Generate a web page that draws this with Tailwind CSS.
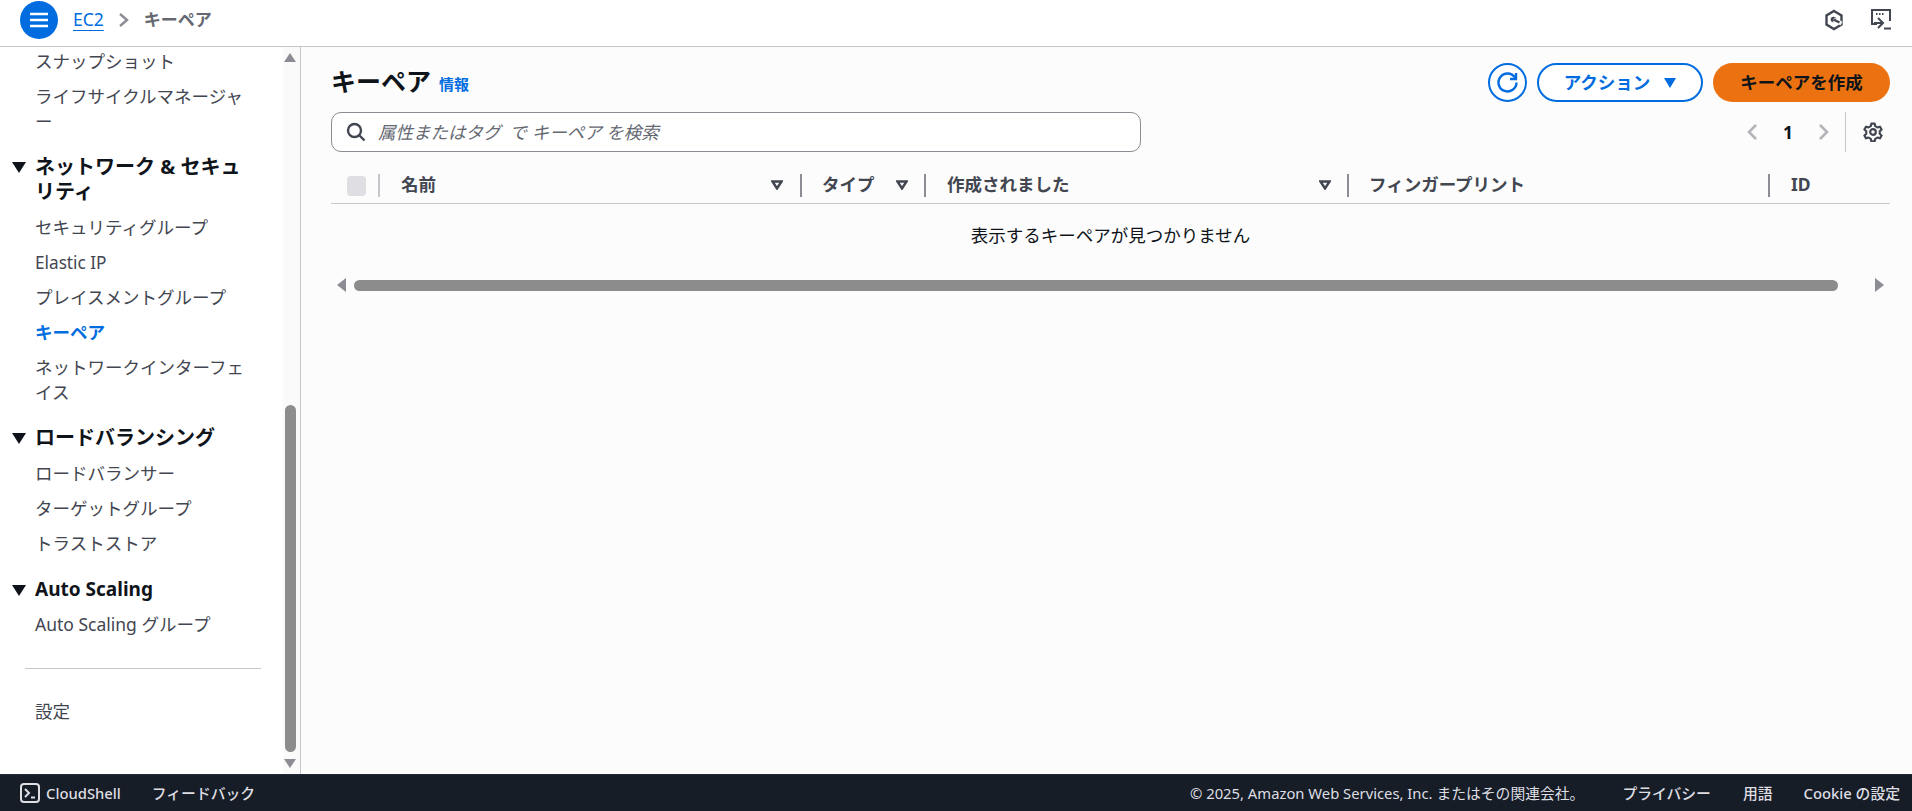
<!DOCTYPE html>
<html lang="ja">
<head>
<meta charset="UTF-8" />
<title>キーペア | EC2</title>
<script src="https://cdn.jsdelivr.net/npm/@tailwindcss/browser@4"></script>
</head>
<body class="h-[811px] w-[1912px] overflow-hidden bg-white font-['Noto_Sans','Noto_Sans_CJK_JP',sans-serif] text-[17.5px] leading-[25px] text-[#424650]">
<div class="flex h-[811px] flex-col">

	<!-- Top bar -->
	<header class="flex h-[47px] shrink-0 items-center border-b border-[#c6c6cd] bg-white pb-[7px] pl-[20px] pr-[21px]">
		<button class="flex h-[38px] w-[38px] items-center justify-center rounded-full bg-[#006ce0]">
			<svg width="20" height="16" viewBox="0 0 20 16" fill="none" stroke="white" stroke-width="2.4"><path d="M1 2h18M1 8h18M1 14h18" /></svg>
		</button>
		<a class="ml-[15px] text-[#006ce0] underline underline-offset-4">EC2</a>
		<svg class="ml-[14px]" width="12" height="16" viewBox="0 0 12 16" fill="none" stroke="#8c8c94" stroke-width="2.4"><path d="M2 2l7 6-7 6" /></svg>
		<span class="ml-[14px] text-[17px] font-bold text-[#656871]">キーペア</span>
		<div class="ml-auto flex items-center gap-[27px]">
			<svg width="20" height="22" viewBox="0 0 20 22" fill="none" stroke="#424650" stroke-width="2.4"><path d="M10 2l7.5 4.4v9.2L10 20l-7.5-4.4V6.4z" /><circle cx="9.5" cy="10.5" r="2.8" fill="#424650" stroke="none" /><path d="M9.500 10.500l8 4" stroke="white" stroke-width="4" /><path d="M9.500 10.500l6 3" /></svg>
			<svg width="20" height="21" viewBox="0 0 20 21" fill="none" stroke="#424650" stroke-width="2"><path d="M6 15H1V1h18v11" /><path d="M5 5h1.500M8 5h1.500M11 5h1.500" /><path d="M7 9l5 5-5 5M3 14h8M13 19.500h7" /></svg>
		</div>
	</header>

	<div class="flex min-h-0 flex-1">
		<!-- Side navigation -->
		<nav class="flex w-[301px] shrink-0 border-r border-[#c6c6cd]">
			<div class="w-[283px] shrink-0 pl-[35px] pr-[33px]">
				<p class="-mt-[3px] py-[5px]">スナップショット</p>
				<p class="py-[5px]">ライフサイクルマネージャー</p>

				<h3 class="relative mt-[15px] text-[20px] font-bold text-[#0f141a]"><span class="absolute left-[-23px] top-[8px] h-0 w-0 border-x-[7px] border-t-[11px] border-x-transparent border-t-[#0f141a]"></span>ネットワーク &amp; セキュリティ</h3>
				<ul class="mt-[6px]">
					<li class="py-[5px]">セキュリティグループ</li>
					<li class="py-[5px] text-[17.2px]">Elastic IP</li>
					<li class="py-[5px]">プレイスメントグループ</li>
					<li class="py-[5px] font-bold text-[#006ce0]">キーペア</li>
					<li class="py-[5px]">ネットワークインターフェイス</li>
				</ul>

				<h3 class="relative mt-[15px] text-[20px] font-bold text-[#0f141a]"><span class="absolute left-[-23px] top-[8px] h-0 w-0 border-x-[7px] border-t-[11px] border-x-transparent border-t-[#0f141a]"></span>ロードバランシング</h3>
				<ul class="mt-[6px]">
					<li class="py-[5px]">ロードバランサー</li>
					<li class="py-[5px]">ターゲットグループ</li>
					<li class="py-[5px]">トラストストア</li>
				</ul>

				<h3 class="relative mt-[16px] text-[19px] font-bold text-[#0f141a]"><span class="absolute left-[-23px] top-[8px] h-0 w-0 border-x-[7px] border-t-[11px] border-x-transparent border-t-[#0f141a]"></span>Auto Scaling</h3>
				<p class="mt-[5px] py-[5px]">Auto Scaling グループ</p>

				<hr class="-ml-[10px] -mr-[11px] mt-[26px] border-[#c6c6cd]" />
				<p class="mt-[30px]">設定</p>
			</div>
			<!-- Scrollbar -->
			<div class="relative flex-1 bg-[#fafafa]">
				<span class="absolute left-[1px] top-[6px] h-0 w-0 border-x-[6.5px] border-b-[9px] border-x-transparent border-b-[#8c8c94]"></span>
				<span class="absolute bottom-[22px] left-[2px] top-[358px] w-[11px] rounded-full bg-[#8c8c8c]"></span>
				<span class="absolute bottom-[6px] left-[1px] h-0 w-0 border-x-[6.5px] border-t-[9px] border-x-transparent border-t-[#8c8c94]"></span>
			</div>
		</nav>

		<!-- Main content -->
		<main class="min-w-0 flex-1 bg-[#fcfcfc] pl-[30px] pr-[22px]">
			<div class="flex h-[65px] items-start justify-between pt-[16px]">
				<div class="flex items-baseline gap-[8px] pt-[2px]">
					<h1 class="text-[25px] font-bold leading-[32px] text-[#0f141a]">キーペア</h1>
					<a class="relative -top-px text-[15px] font-bold text-[#006ce0]">情報</a>
				</div>
				<div class="flex items-center gap-[10px]">
					<button class="flex h-[39px] w-[39px] items-center justify-center rounded-full border-2 border-[#006ce0] bg-white">
						<svg width="23" height="23" viewBox="0 0 23 23" fill="none" stroke="#006ce0" stroke-width="2.4"><path d="M19 6.500A9 9 0 1 0 20.500 11.500" /><path d="M20 2v6h-6" /></svg>
					</button>
					<button class="flex h-[39px] w-[166px] items-center justify-center gap-[14px] rounded-full border-2 border-[#006ce0] bg-white font-bold text-[#006ce0]">アクション<span class="h-0 w-0 border-x-[6.5px] border-t-[10px] border-x-transparent border-t-[#006ce0]"></span></button>
					<button class="h-[39px] w-[177px] rounded-full bg-[#ec7211] font-bold text-[#0f141a]">キーペアを作成</button>
				</div>
			</div>

			<div class="flex h-[40px] items-center">
				<div class="flex h-[40px] w-[810px] items-center rounded-[10px] border border-[#8c8c94] bg-white pl-[14px] italic text-[#656871]">
					<svg class="mr-[12px]" width="20" height="20" viewBox="0 0 20 20" fill="none" stroke="#424650" stroke-width="2.4"><circle cx="8.5" cy="8.5" r="6.5" /><path d="M13 13l5.500 5.500" /></svg>
					<span>属性またはタグ&nbsp; で キーペア を検索</span>
				</div>
				<div class="ml-auto mr-[7px] flex items-center">
					<svg width="12" height="18" viewBox="0 0 12 18" fill="none" stroke="#b4b4bb" stroke-width="2.6"><path d="M10 2L3 9l7 7" /></svg>
					<span class="w-[60px] text-center font-bold text-[#0f141a]">1</span>
					<svg width="12" height="18" viewBox="0 0 12 18" fill="none" stroke="#b4b4bb" stroke-width="2.6"><path d="M2 2l7 7-7 7" /></svg>
					<span class="ml-[15px] h-[40px] w-px bg-[#c6c6cd]"></span>
					<svg class="ml-[17px]" width="20" height="20" viewBox="0 0 24 24" fill="none" stroke="#424650" stroke-width="2.6" stroke-linejoin="round"><circle cx="12" cy="12" r="3.4" /><path d="M10 2h4l.7 3 2.6 1.500 3-.9 2 3.400-2.200 2.100v3l2.200 2.100-2 3.400-3-.9-2.600 1.500-.7 3h-4l-.7-3-2.600-1.500-3 .9-2-3.400 2.200-2.100v-3L1.700 9l2-3.400 3 .9L9.300 5z" /></svg>
				</div>
			</div>

			<!-- Table -->
			<div class="mt-[17px] flex h-[35px] items-start border-b border-[#c6c6cd] pt-[5px] font-bold">
				<div class="flex h-[23px] w-[49px] shrink-0 items-center">
					<span class="ml-[16px] h-[20px] w-[20px] rounded-[4px] bg-[#dedee3]"></span>
					<span class="ml-[12px] h-[23px] w-[2px] bg-[#c6c6cd]"></span>
				</div>
				<div class="flex h-[23px] w-[422px] shrink-0 items-center justify-between border-r-2 border-[#8c8c94] pb-[2px] pl-[21px] pr-[17px]">名前<svg width="12" height="10" viewBox="0 0 12 10" fill="none" stroke="#424650" stroke-width="2.4"><path d="M1.500 1.500h9L6 8.500z" /></svg></div>
				<div class="flex h-[23px] w-[124px] shrink-0 items-center justify-between border-r-2 border-[#8c8c94] pb-[2px] pl-[20px] pr-[16px]">タイプ<svg width="12" height="10" viewBox="0 0 12 10" fill="none" stroke="#424650" stroke-width="2.4"><path d="M1.500 1.500h9L6 8.500z" /></svg></div>
				<div class="flex h-[23px] w-[423px] shrink-0 items-center justify-between border-r-2 border-[#8c8c94] pb-[2px] pl-[21px] pr-[16px]">作成されました<svg width="12" height="10" viewBox="0 0 12 10" fill="none" stroke="#424650" stroke-width="2.4"><path d="M1.500 1.500h9L6 8.500z" /></svg></div>
				<div class="flex h-[23px] w-[421px] shrink-0 items-center border-r-2 border-[#8c8c94] pb-[2px] pl-[20px]">フィンガープリント</div>
				<div class="flex h-[23px] items-center pb-[2px] pl-[21px]">ID</div>
			</div>
			<p class="pt-[19px] text-center text-[#0f141a]">表示するキーペアが見つかりません</p>

			<div class="mt-[30px] flex items-center">
				<span class="ml-[6px] h-0 w-0 border-y-[7px] border-r-[9px] border-y-transparent border-r-[#8c8c94]"></span>
				<span class="ml-[8px] h-[11px] w-[1484px] rounded-full bg-[#8c8c8c]"></span>
				<span class="ml-auto mr-[6px] h-0 w-0 border-y-[7px] border-l-[9px] border-y-transparent border-l-[#8c8c94]"></span>
			</div>
		</main>
	</div>

	<!-- Footer -->
	<footer class="flex h-[37px] shrink-0 items-center border-t border-[#232b37] bg-[#161d26] pl-[20px] pr-[12px] text-[14.8px] text-[#dedee3]">
		<svg width="20" height="20" viewBox="0 0 20 20" fill="none" stroke="#dedee3" stroke-width="2"><rect x="1" y="1" width="18" height="18" rx="3" /><path d="M5 6l4 4-4 4M11 14.500h4" /></svg>
		<span class="ml-[6px] font-medium">CloudShell</span>
		<span class="ml-[31px] font-medium">フィードバック</span>
		<span class="ml-auto">© 2025, Amazon Web Services, Inc. またはその関連会社。</span>
		<span class="ml-[38px] font-medium">プライバシー</span>
		<span class="ml-[32px] font-medium">用語</span>
		<span class="ml-[31px] font-medium">Cookie の設定</span>
	</footer>
</div>
</body>
</html>
